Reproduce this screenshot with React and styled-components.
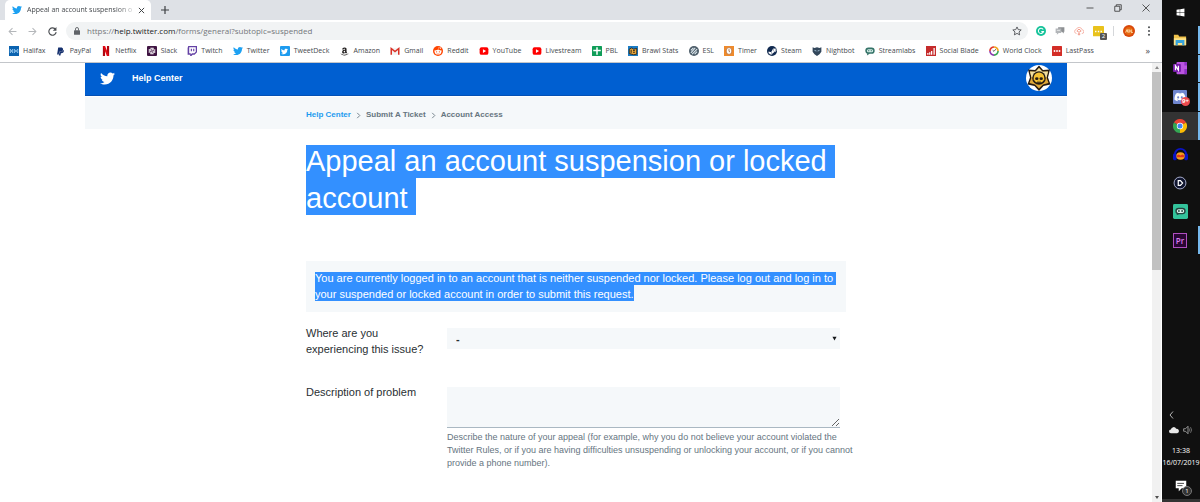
import React, { useState } from "react";
import styled, { createGlobalStyle, css } from "styled-components";
import { FaTwitter, FaPaypal, FaSlack, FaAmazon, FaRedditAlien, FaSteamSymbol, FaDiscord, FaWindows } from "react-icons/fa";

/* ---------- icons ---------- */

const Svg = ({ size = 10, box = 16, children }) => (
  <svg width={size} height={size} viewBox={`0 0 ${box} ${box}`} fill="none" aria-hidden="true">
    {children}
  </svg>
);

const HalifaxIcon = () => (
  <Svg>
    <rect width="16" height="16" fill="#0b63b0" />
    <path d="M2 5l4 6M6 5l-4 6M2 5v6M6 5v6M8 5l6 6M14 5l-6 6M14 5v6M9 5v6" stroke="#9fd0f5" strokeWidth="1.2" />
  </Svg>
);

const NetflixIcon = () => (
  <Svg>
    <path d="M3 0h3.500v16H3zM9.500 0H13v16H9.500z" fill="#b1060f" />
    <path d="M3 0h3.500L13 16H9.500z" fill="#e50914" />
  </Svg>
);

const TwitchIcon = () => (
  <Svg>
    <path d="M2 0h14v10l-4 4H9l-2 2H5v-2H1V3z" fill="#6441a5" />
    <path d="M3.500 2h10.500v7L11.500 11.500H8l-2 2v-2H3.500z" fill="#fff" />
    <path d="M7 4.500v4M10.800 4.500v4" stroke="#6441a5" strokeWidth="1.800" />
  </Svg>
);

const GmailIcon = () => (
  <Svg>
    <path d="M1 3h14v11H1z" fill="#f2f2f2" />
    <path d="M2 14V4l6 5 6-5v10" stroke="#d93025" strokeWidth="2.400" />
  </Svg>
);

const YoutubeIcon = () => (
  <Svg>
    <rect x="1" y="2" width="14" height="12" rx="3" fill="#f00" />
    <path d="M6.300 5v6l5-3z" fill="#fff" />
  </Svg>
);

const SheetIcon = () => (
  <Svg>
    <rect width="16" height="16" rx="1" fill="#0f9d58" />
    <path d="M2 7h12M8 2v12" stroke="#fff" strokeWidth="2.400" />
  </Svg>
);

const BrawlIcon = () => (
  <Svg>
    <rect width="16" height="16" fill="#1b7cc4" />
    <path d="M2 5l4-2 3 2 5-1v9l-5 1-7-2z" fill="#e8a63a" stroke="#2b2419" strokeWidth="1.400" />
    <path d="M5 6v5M8 7h3M8 10h3" stroke="#2b2419" strokeWidth="1.500" />
  </Svg>
);

const EslIcon = () => (
  <Svg>
    <circle cx="8" cy="8" r="8" fill="#4d5d69" />
    <path d="M3 11l7-8M5 13l8-8M3 7l4-4M9 13l4-4" stroke="#dfeaf0" strokeWidth="1.700" />
  </Svg>
);

const TimerIcon = () => (
  <Svg>
    <rect width="16" height="16" fill="#ee8a2c" />
    <ellipse cx="8" cy="8" rx="4.500" ry="5.500" fill="#fff" stroke="#a9591b" />
    <path d="M8 5v3.500l1.500 1" stroke="#8a4a19" strokeWidth="1.200" />
  </Svg>
);

const NightbotIcon = () => (
  <Svg>
    <path d="M1 2l3 1 4-1 4 1 3-1v7l-3 4-4 3-4-3-3-4z" fill="#33475b" />
    <path d="M4 7l3 1M12 7L9 8" stroke="#a7c6dc" strokeWidth="1.400" />
  </Svg>
);

const StreamlabsIcon = () => (
  <Svg>
    <rect x="0.500" y="2.500" width="15" height="10" rx="5" fill="#357368" />
    <path d="M4 11l-1 4 5-3z" fill="#357368" />
    <rect x="3" y="5" width="10" height="5" rx="2.500" fill="#d7efe9" />
    <path d="M6 6.500v2M10 6.500v2" stroke="#357368" strokeWidth="1.600" />
  </Svg>
);

const BladeIcon = () => (
  <Svg>
    <rect width="16" height="16" fill="#c52b2b" />
    <path d="M3 14v-3M6 14v-4M9 14V8M13 14V3" stroke="#fff" strokeWidth="2" />
  </Svg>
);

const ClockIcon = () => (
  <Svg>
    <path d="M8 1.500A6.500 6.500 0 0 1 14.500 8" stroke="#f2a51c" strokeWidth="2.600" />
    <path d="M14.500 8A6.500 6.500 0 0 1 8 14.500" stroke="#3aa655" strokeWidth="2.600" />
    <path d="M8 14.500A6.500 6.500 0 0 1 1.500 8" stroke="#8d3bb0" strokeWidth="2.600" />
    <path d="M1.500 8A6.500 6.500 0 0 1 8 1.500" stroke="#e23b2e" strokeWidth="2.600" />
    <path d="M8 8.500l3-3.500M8 8.500L6 7" stroke="#444" strokeWidth="1.300" />
  </Svg>
);

const LastPassIcon = () => (
  <Svg>
    <rect width="16" height="16" rx="1" fill="#d32d27" />
    <circle cx="4" cy="8" r="1.500" fill="#fff" />
    <circle cx="8" cy="8" r="1.500" fill="#fff" />
    <circle cx="12" cy="8" r="1.500" fill="#fff" />
  </Svg>
);

const ChromeIcon = () => (
  <Svg size={14} box={24}>
    <path d="M12 12L1.600 6A12 12 0 0 1 22.400 6z" fill="#ea4335" />
    <path d="M12 12l10.400-6A12 12 0 0 1 12 24z" fill="#fbbc05" />
    <path d="M12 12v12A12 12 0 0 1 1.600 6z" fill="#34a853" />
    <circle cx="12" cy="12" r="5.500" fill="#fff" />
    <circle cx="12" cy="12" r="4.300" fill="#4285f4" />
  </Svg>
);

const FolderIcon = () => (
  <Svg size={14}>
    <path d="M1 2h5l1 2h8v10H1z" fill="#f0c24b" />
    <path d="M1 6h14v8H1z" fill="#fce38b" />
    <path d="M3 8h10v6h-2.500v-2.500h-5V14H3z" fill="#36a3dc" />
  </Svg>
);

const OneNoteIcon = () => (
  <Svg size={14}>
    <rect x="4" y="1" width="12" height="14" rx="1" fill="#ba55e0" />
    <path d="M13 1h3v4h-3zM13 9h3v6h-3z" fill="#8f2fc4" />
    <rect y="3.500" width="9" height="9" rx="1" fill="#7719aa" />
    <path d="M2.800 10.500v-5l3.400 5v-5" stroke="#fff" strokeWidth="1.400" />
  </Svg>
);

const HeadphonesIcon = () => (
  <Svg size={15}>
    <path d="M2 11V8a6 6 0 0 1 12 0v3" stroke="#0a13c4" strokeWidth="2" />
    <rect y="7" width="4" height="7" rx="1.500" fill="#0a13c4" />
    <rect x="12" y="7" width="4" height="7" rx="1.500" fill="#0a13c4" />
    <ellipse cx="8" cy="9.500" rx="4.500" ry="4" fill="#f5a01d" />
    <path d="M4 9l2-1 2 1 2-1 2 1-.500 2h-7z" fill="#e2321e" />
  </Svg>
);

const PlayIcon = () => (
  <Svg size={14}>
    <circle cx="8" cy="8" r="6.800" fill="#10152e" stroke="#b9bfe0" strokeWidth="1" />
    <path d="M6 5.300v5.400h2.500L11 8 8.500 5.300z" stroke="#fff" strokeWidth="1.400" />
  </Svg>
);

const ObsIcon = () => (
  <Svg size={15}>
    <rect width="16" height="16" rx="1.500" fill="#33c39b" />
    <rect x="2.500" y="4" width="11" height="7" rx="3.500" fill="#23443f" />
    <rect x="4" y="5.500" width="8" height="4" rx="2" fill="#d9f4ec" />
    <path d="M6.300 6.500v2M9.700 6.500v2" stroke="#23443f" strokeWidth="1.400" />
    <path d="M4 10v2l3-1.500z" fill="#23443f" />
  </Svg>
);

const AvatarIcon = () => (
  <Svg size={26} box={26}>
    <circle cx="13" cy="13" r="13" fill="#fff" />
    <path d="M13 .500l4 4.500 7-.500-2 8 2.500 7-7 1.500-4.500 5-4.500-5-7-1.500 2.500-7-2-8 7 .500z" fill="#241a12" />
    <path d="M13 3l3.500 3.800 5.500-.300-1.500 6 2 5.500-5.500 1.500L13 23.500l-4-4L3.500 18l2-5.500-1.500-6 5.500.300z" fill="#e0a838" />
    <path d="M13 3l3.500 3.800 5.500-.300-1.500 6h-15l-1.500-6 5.500.300z" fill="#f1dfa0" />
    <circle cx="13" cy="13" r="6.800" fill="#241a12" />
    <path d="M7.700 12.800a5.300 5.300 0 0 1 10.600 0v2L16 17.300h-6l-2.300-2.500z" fill="#f6c234" />
    <ellipse cx="10.800" cy="13.700" rx="1.700" ry="1.400" fill="#241a12" />
    <ellipse cx="15.200" cy="13.700" rx="1.700" ry="1.400" fill="#241a12" />
    <path d="M12 17.300v-1.500M14 17.300v-1.500" stroke="#241a12" strokeWidth="0.700" />
  </Svg>
);

/* ---------- data ---------- */

const bookmarks = [
  ["Halifax", <HalifaxIcon />],
  ["PayPal", <FaPaypal size={9} color="#15306e" />],
  ["Netflix", <NetflixIcon />],
  ["Slack", <FaSlack size={8} color="#fff" />, "#3f1442"],
  ["Twitch", <TwitchIcon />],
  ["Twitter", <FaTwitter size={10} color="#1da1f2" />],
  ["TweetDeck", <FaTwitter size={7} color="#fff" />, "#1d9bef"],
  ["Amazon", <FaAmazon size={9} color="#221f1f" />],
  ["Gmail", <GmailIcon />],
  ["Reddit", <FaRedditAlien size={8} color="#fff" />, "#ff4500", true],
  ["YouTube", <YoutubeIcon />],
  ["Livestream", <YoutubeIcon />],
  ["PBL", <SheetIcon />],
  ["Brawl Stats", <BrawlIcon />],
  ["ESL", <EslIcon />],
  ["Timer", <TimerIcon />],
  ["Steam", <FaSteamSymbol size={9} color="#fff" />, "#10294f", true],
  ["Nightbot", <NightbotIcon />],
  ["Streamlabs", <StreamlabsIcon />],
  ["Social Blade", <BladeIcon />],
  ["World Clock", <ClockIcon />],
  ["LastPass", <LastPassIcon />],
];

const apps = [
  { name: "Start", icon: <FaWindows size={9} color="#fff" /> },
  { name: "File Explorer", icon: <FolderIcon />, running: true },
  { name: "OneNote", icon: <OneNoteIcon />, running: true },
  { name: "Discord", icon: <FaDiscord size={12} color="#fff" />, running: true, badge: "9+", tile: true },
  { name: "Chrome", icon: <ChromeIcon />, running: true, active: true },
  { name: "Audacity", icon: <HeadphonesIcon /> },
  { name: "Player", icon: <PlayIcon /> },
  { name: "Streamlabs OBS", icon: <ObsIcon /> },
  { name: "Premiere", icon: <PremiereMark />, running: true },
];

function PremiereMark() {
  return <Premiere>Pr</Premiere>;
}

/* ---------- page ---------- */

const App = () => {
  const [issue, setIssue] = useState("");
  const [description, setDescription] = useState("");

  return (
    <Screen>
      <GlobalStyle />
      <Browser>
        <TabStrip>
          <Tab>
            <FaTwitter size={10} color="#1da1f2" />
            <TabTitle>Appeal an account suspension o</TabTitle>
            <IconButton aria-label="Close tab">
              <Svg size={7}>
                <path d="M2 2l12 12M14 2L2 14" stroke="#3c4043" strokeWidth="2.200" />
              </Svg>
            </IconButton>
          </Tab>
          <IconButton aria-label="New tab">
            <Svg size={8}>
              <path d="M8 0v16M0 8h16" stroke="#3c4043" strokeWidth="2.400" />
            </Svg>
          </IconButton>
          <WindowControls>
            <IconButton aria-label="Minimize">
              <Svg size={8}>
                <path d="M1 8h14" stroke="#333" strokeWidth="1.600" />
              </Svg>
            </IconButton>
            <IconButton aria-label="Restore">
              <Svg size={8}>
                <path d="M1.500 4.500h10v10h-10zM4.500 4V1.500h10v10H12" stroke="#333" strokeWidth="1.600" />
              </Svg>
            </IconButton>
            <IconButton aria-label="Close">
              <Svg size={8}>
                <path d="M1 1l14 14M15 1L1 15" stroke="#333" strokeWidth="1.600" />
              </Svg>
            </IconButton>
          </WindowControls>
        </TabStrip>

        <Toolbar>
          <NavButtons>
            <IconButton aria-label="Back">
              <Svg size={9}>
                <path d="M15 8H2M8 2L2 8l6 6" stroke="#b4b7ba" strokeWidth="1.800" />
              </Svg>
            </IconButton>
            <IconButton aria-label="Forward">
              <Svg size={9}>
                <path d="M1 8h13M8 2l6 6-6 6" stroke="#b4b7ba" strokeWidth="1.800" />
              </Svg>
            </IconButton>
            <IconButton aria-label="Reload">
              <Svg size={9}>
                <path d="M13.500 4.500A6.500 6.500 0 1 0 14.500 9" stroke="#4a4d51" strokeWidth="2" />
                <path d="M15 0v6.500H8.500z" fill="#4a4d51" />
              </Svg>
            </IconButton>
          </NavButtons>
          <Omnibox>
            <Svg size={8}>
              <rect x="2" y="6.500" width="12" height="9" rx="1" fill="#5f6368" />
              <path d="M5 7V4a3 3 0 0 1 6 0v3" stroke="#5f6368" strokeWidth="1.800" />
            </Svg>
            <Url>
              https://<b>help.twitter.com</b>/forms/general?subtopic=suspended
            </Url>
            <IconButton aria-label="Bookmark this page">
              <Svg size={10}>
                <path d="M8 1.500l2 4.300 4.700.500-3.500 3.200 1 4.700L8 11.800l-4.200 2.400 1-4.700L1.300 6.300 6 5.800z" stroke="#4a4d51" strokeWidth="1.400" />
              </Svg>
            </IconButton>
          </Omnibox>
          <Extensions>
            <Svg size={10}>
              <circle cx="8" cy="8" r="8" fill="#15c39a" />
              <path d="M11.500 5.500A4.200 4.200 0 1 0 12 9H8.500" stroke="#fff" strokeWidth="1.700" />
            </Svg>
            <Svg size={10}>
              <path d="M5 2h10v7h-1v3l-3-3H5z" fill="#8d9093" />
              <path d="M1 4h9v7H6l-3 3v-3H1z" fill="#b3b6b9" />
              <path d="M3 7h5" stroke="#fff" />
            </Svg>
            <Svg size={10}>
              <path d="M4 12a3.300 3.300 0 0 1-.500-6.500 5 5 0 0 1 9.500.500 3 3 0 0 1-.500 6" stroke="#f6b3a6" strokeWidth="1.500" />
              <path d="M5.500 9.500a2.800 2.800 0 1 1 5 0M8 8v7M6 13h4" stroke="#ef8e7c" strokeWidth="1.500" />
            </Svg>
            <BadgedIcon>
              <Svg size={11}>
                <rect width="16" height="15" rx="1" fill="#e9c21c" />
                <path d="M3 8h10" stroke="#fff" strokeWidth="2" strokeDasharray="2 2" />
              </Svg>
              <CountBadge>2</CountBadge>
            </BadgedIcon>
            <Separator />
            <Svg size={12}>
              <circle cx="8" cy="8" r="8" fill="#d9480b" />
              <circle cx="8" cy="8" r="5.500" fill="#e5690f" />
              <path d="M3.500 10l2-4 1 4M8 10V6l2 2-2 2M11 6v4h2" stroke="#ffd9a8" strokeWidth="1.300" />
            </Svg>
            <IconButton aria-label="Menu">
              <Svg size={10}>
                <circle cx="8" cy="2" r="1.600" fill="#4a4d51" />
                <circle cx="8" cy="8" r="1.600" fill="#4a4d51" />
                <circle cx="8" cy="14" r="1.600" fill="#4a4d51" />
              </Svg>
            </IconButton>
          </Extensions>
        </Toolbar>

        <BookmarkBar>
          <BookmarkList>
            {bookmarks.map(([label, icon, tile, round]) => (
              <Bookmark href="#" key={label}>
                <Favicon $tile={tile} $round={round}>
                  {icon}
                </Favicon>
                {label}
              </Bookmark>
            ))}
          </BookmarkList>
          <More aria-label="More bookmarks">»</More>
        </BookmarkBar>

        <Viewport>
          <Site>
            <SiteHeader>
              <FaTwitter size={15} color="#fff" />
              <SiteTitle href="#">Help Center</SiteTitle>
              <AvatarIcon />
            </SiteHeader>
            <Breadcrumb aria-label="Breadcrumb">
              <Crumb href="#" $current>
                Help Center
              </Crumb>
              <CrumbArrow />
              <Crumb href="#">Submit A Ticket</Crumb>
              <CrumbArrow />
              <Crumb href="#">Account Access</Crumb>
            </Breadcrumb>
            <Content>
              <Heading>
                <HeadingLine>Appeal an account suspension or locked</HeadingLine>
                <HeadingLine>account</HeadingLine>
              </Heading>
              <Notice>
                <NoticeLine $trail>You are currently logged in to an account that is neither suspended nor locked. Please log out and log in to</NoticeLine>
                <NoticeLine>your suspended or locked account in order to submit this request.</NoticeLine>
              </Notice>
              <Form onSubmit={(e) => e.preventDefault()}>
                <Label htmlFor="issue">Where are you experiencing this issue?</Label>
                <SelectBox>
                  <Select id="issue" value={issue} onChange={(e) => setIssue(e.target.value)}>
                    <option value="">-</option>
                  </Select>
                  <SelectArrow viewBox="0 0 6 6" aria-hidden="true">
                    <path d="M0.500 1h5L3 5.500z" fill="#14171a" />
                  </SelectArrow>
                </SelectBox>
                <Label htmlFor="description">Description of problem</Label>
                <div>
                  <TextArea id="description" value={description} onChange={(e) => setDescription(e.target.value)} />
                  <Hint>
                    Describe the nature of your appeal (for example, why you do not believe your account violated the
                    <br />
                    Twitter Rules, or if you are having difficulties unsuspending or unlocking your account, or if you cannot
                    <br />
                    provide a phone number).
                  </Hint>
                </div>
              </Form>
            </Content>
          </Site>
          <Scrollbar>
            <ScrollArrow />
            <Thumb />
            <ScrollArrow $down />
          </Scrollbar>
        </Viewport>
      </Browser>

      <Taskbar>
        <AppList>
          {apps.map(({ name, icon, running, active, badge, tile }) => (
            <AppButton key={name} aria-label={name} $running={running} $active={active}>
              <AppIcon $tile={tile}>
                {icon}
                {badge && <AppBadge>{badge}</AppBadge>}
              </AppIcon>
            </AppButton>
          ))}
        </AppList>
        <Tray>
          <TrayRow $start>
            <Svg size={8}>
              <path d="M10 1L4 8l6 7" stroke="#ddd" strokeWidth="1.600" />
            </Svg>
          </TrayRow>
          <TrayRow>
            <Svg size={10}>
              <path d="M3 13a3 3 0 0 1 0-6 4.500 4.500 0 0 1 8.500-1A3.500 3.500 0 0 1 13 13z" fill="#e9e9e9" />
            </Svg>
            <Svg size={10}>
              <path d="M1 6h3l4-4v12l-4-4H1z" stroke="#bbb" strokeWidth="1.200" />
              <path d="M10 5.500q2 2.500 0 5M12 3.500q3.500 4.500 0 9" stroke="#888" strokeWidth="1.200" />
            </Svg>
          </TrayRow>
          <Clock>
            <span>13:38</span>
            <span>16/07/2019</span>
          </Clock>
          <Notifications aria-label="Notifications">
            <Svg size={12}>
              <path d="M1 1h14v10H9l-4 4v-4H1z" fill="#fff" />
              <path d="M3 4.500h9M3 7.500h7" stroke="#111" />
            </Svg>
            <NotificationCount>1</NotificationCount>
          </Notifications>
        </Tray>
      </Taskbar>
    </Screen>
  );
};

const CrumbArrow = () => (
  <Svg size={7}>
    <path d="M5 2l6 6-6 6" stroke="#66757f" strokeWidth="2" />
  </Svg>
);

/* ---------- styles ---------- */

const uiFont = `"Open Sans", "Noto Sans", sans-serif`;
const pageFont = `"Liberation Sans", Arial, sans-serif`;

const GlobalStyle = createGlobalStyle`
  *, *::before, *::after {
    box-sizing: border-box;
  }
  body {
    margin: 0;
    background: #fff;
  }
  svg {
    display: block;
    flex: none;
  }
  button {
    border: 0;
    padding: 0;
    background: none;
    font: inherit;
    color: inherit;
  }
`;

const Screen = styled.div`
  display: flex;
  height: 100vh;
  overflow: hidden;
  background: #111;
`;

const Browser = styled.div`
  display: flex;
  flex-direction: column;
  flex: 1;
  min-width: 0;
  background: #fff;
  font-family: ${uiFont};
`;

const IconButton = styled.button`
  display: flex;
  align-items: center;
  justify-content: center;
`;

const TabStrip = styled.div`
  display: flex;
  align-items: center;
  gap: 10px;
  height: 20px;
  padding: 0 12px 0 5px;
  background: #dee1e6;
`;

const Tab = styled.div`
  display: flex;
  align-items: center;
  gap: 5px;
  width: 146px;
  height: 20px;
  padding: 0 6px 0 7px;
  border-radius: 5px 5px 0 0;
  background: #fff;
`;

const TabTitle = styled.span`
  flex: 1;
  white-space: nowrap;
  font-size: 7px;
  line-height: 12px;
  color: #45494d;
  mask-image: linear-gradient(to right, #000 85%, rgba(0, 0, 0, 0.2));
`;

const WindowControls = styled.div`
  display: flex;
  gap: 20px;
  height: 16px;
  margin-left: auto;
  align-self: flex-start;
`;

const Toolbar = styled.div`
  display: flex;
  align-items: center;
  height: 22px;
  padding: 0 8px;
`;

const NavButtons = styled.div`
  display: flex;
  gap: 11px;
  width: 58px;
`;

const Omnibox = styled.div`
  display: flex;
  align-items: center;
  flex: 1;
  gap: 6px;
  height: 18px;
  padding: 0 6px 0 7px;
  border-radius: 9px;
  background: #f1f3f4;
`;

const Url = styled.span`
  flex: 1;
  font-size: 8px;
  line-height: 16px;
  color: #73777b;
  b {
    font-weight: 400;
    color: #202124;
  }
`;

const Extensions = styled.div`
  display: flex;
  align-items: center;
  gap: 9px;
  padding-left: 8px;
`;

const BadgedIcon = styled.div`
  position: relative;
`;

const CountBadge = styled.span`
  position: absolute;
  right: -3px;
  bottom: -3px;
  width: 7px;
  border-radius: 1px;
  background: #555;
  color: #fff;
  font-size: 6px;
  line-height: 7px;
  text-align: center;
`;

const Separator = styled.div`
  width: 1px;
  height: 10px;
  background: #d5d7da;
`;

const BookmarkBar = styled.div`
  display: flex;
  align-items: center;
  justify-content: space-between;
  height: 21px;
  padding: 0 12px 2px 9px;
  border-bottom: 1px solid #c3c6ca;
`;

const BookmarkList = styled.div`
  display: flex;
  justify-content: space-between;
  flex: 0 1 1085px;
  min-width: 0;
`;

const Bookmark = styled.a`
  display: flex;
  align-items: center;
  gap: 4px;
  font-size: 7px;
  line-height: 10px;
  white-space: nowrap;
  text-decoration: none;
  color: #45494d;
`;

const Favicon = styled.span`
  display: flex;
  align-items: center;
  justify-content: center;
  width: 10px;
  height: 10px;
  border-radius: ${({ $round }) => ($round ? "50%" : "1px")};
  background: ${({ $tile }) => $tile || "none"};
`;

const More = styled.button`
  font-size: 9px;
  line-height: 10px;
  color: #45494d;
`;

const Viewport = styled.div`
  display: flex;
  flex: 1;
  min-height: 0;
  font-family: ${pageFont};
`;

const Site = styled.div`
  flex: 1;
  max-width: 982px;
  margin: 0 auto;
  overflow: hidden;
`;

const SiteHeader = styled.header`
  display: flex;
  align-items: center;
  gap: 17px;
  height: 33px;
  padding: 0 15px 2px;
  border-bottom: 1px solid #0450b4;
  background: #005fd1;
`;

const SiteTitle = styled.a`
  flex: 1;
  font-size: 9px;
  font-weight: 700;
  line-height: 12px;
  text-decoration: none;
  color: #fff;
`;

const Breadcrumb = styled.nav`
  display: flex;
  align-items: center;
  gap: 4px;
  height: 32px;
  margin-top: 1px;
  padding: 4px calc(50% - 270px) 0;
  background: #f5f8fa;
`;

const Crumb = styled.a`
  font-size: 8px;
  font-weight: 700;
  line-height: 12px;
  text-decoration: none;
  color: ${({ $current }) => ($current ? "#1d9bef" : "#66757f")};
`;

const Content = styled.main`
  max-width: 540px;
  margin: 0 auto;
  padding-top: 16px;
`;

const selected = css`
  background: #3390ff;
  color: #fff;
`;

const Heading = styled.h1`
  display: flex;
  flex-direction: column;
  align-items: flex-start;
  margin: 0 0 46px;
  font-size: 29px;
  font-weight: 400;
  line-height: 33px;
`;

const HeadingLine = styled.span`
  ${selected}
  padding-right: 8px;
  & + & {
    padding-top: 4px;
  }
`;

const Notice = styled.div`
  display: flex;
  flex-direction: column;
  align-items: flex-start;
  margin-bottom: 13px;
  padding: 11px 9px;
  background: #f5f8fa;
  font-size: 11px;
  line-height: 13px;
`;

const NoticeLine = styled.span`
  ${selected}
  white-space: nowrap;
  padding-right: ${({ $trail }) => ($trail ? "3px" : "0")};
  & + & {
    padding-top: 3px;
  }
`;

const Form = styled.form`
  display: grid;
  grid-template-columns: 120px minmax(0, 1fr);
  column-gap: 21px;
  row-gap: 27px;
  padding-right: 6px;
`;

const Label = styled.label`
  font-size: 11px;
  line-height: 16px;
  color: #292f33;
`;

const SelectBox = styled.div`
  position: relative;
  align-self: start;
  margin-top: 3px;
`;

const Select = styled.select`
  display: block;
  appearance: none;
  width: 100%;
  height: 21px;
  padding: 0 9px;
  border: 0;
  border-radius: 0;
  outline: 0;
  background: #f5f8fa;
  font-family: ${pageFont};
  font-size: 11px;
  font-weight: 700;
  color: #292f33;
`;

const SelectArrow = styled.svg`
  position: absolute;
  top: 8px;
  right: 3px;
  width: 5px;
  height: 5px;
  pointer-events: none;
`;

const TextArea = styled.textarea`
  display: block;
  width: 100%;
  height: 41px;
  margin-top: 3px;
  border: 0;
  border-bottom: 1px solid #aab8c2;
  outline: 0;
  resize: vertical;
  background: #f5f8fa;
  font-family: ${pageFont};
  font-size: 11px;
`;

const Hint = styled.p`
  margin: 3px 0 0;
  font-size: 9px;
  line-height: 13px;
  white-space: nowrap;
  color: #66757f;
`;

const Scrollbar = styled.div`
  display: flex;
  flex-direction: column;
  width: 9px;
  margin-right: 1px;
  background: #f1f1f1;
`;

const ScrollArrow = styled.div`
  display: flex;
  align-items: center;
  justify-content: center;
  height: 9px;
  margin-top: ${({ $down }) => ($down ? "auto" : "0")};
  &::before {
    content: "";
    border: 2px solid transparent;
    border-top: ${({ $down }) => ($down ? "3px solid #505050" : "0")};
    border-bottom: ${({ $down }) => ($down ? "0" : "3px solid #8a8a8a")};
  }
`;

const Thumb = styled.div`
  height: 45%;
  background: #c1c1c1;
`;

const Taskbar = styled.aside`
  display: flex;
  flex-direction: column;
  justify-content: space-between;
  width: 38px;
  border-bottom: 3px solid #333;
  background: #101010;
  color: #fff;
  font-family: ${uiFont};
`;

const AppList = styled.div`
  display: grid;
  grid-template-rows: 25px repeat(8, 1fr);
  row-gap: 1px;
  height: 254px;
`;

const AppButton = styled.button`
  display: flex;
  align-items: center;
  justify-content: center;
  border-right: 2px solid ${({ $running }) => ($running ? "#76b9ed" : "transparent")};
  background: ${({ $active }) => ($active ? "#333" : "none")};
  background-clip: padding-box;
`;

const AppIcon = styled.span`
  position: relative;
  display: flex;
  padding: ${({ $tile }) => ($tile ? "1px" : "0")};
  border-radius: 1px;
  background: ${({ $tile }) => ($tile ? "#6f86cf" : "none")};
`;

const AppBadge = styled.span`
  position: absolute;
  right: -3px;
  bottom: -2px;
  width: 9px;
  border-radius: 5px;
  background: #ec4b4f;
  color: #fff;
  font-size: 6px;
  font-weight: 700;
  line-height: 9px;
  text-align: center;
`;

const Premiere = styled.span`
  width: 14px;
  border: 1px solid #b04fc0;
  background: #2a0634;
  color: #da7ff0;
  font-size: 8px;
  font-weight: 600;
  line-height: 13px;
  text-align: center;
`;

const Tray = styled.div`
  display: flex;
  flex-direction: column;
  align-items: center;
  padding-bottom: 7px;
`;

const TrayRow = styled.div`
  display: flex;
  align-items: center;
  justify-content: ${({ $start }) => ($start ? "flex-start" : "center")};
  gap: 4px;
  width: 26px;
  height: 15px;
`;

const Clock = styled.div`
  display: flex;
  flex-direction: column;
  align-items: center;
  margin: 8px 0 11px;
  font-size: 7px;
  line-height: 12px;
`;

const Notifications = styled.button`
  position: relative;
`;

const NotificationCount = styled.span`
  position: absolute;
  right: -5px;
  bottom: -4px;
  width: 10px;
  border: 1px solid #777;
  border-radius: 5px;
  background: #333;
  font-size: 6px;
  line-height: 8px;
  text-align: center;
`;

export default App;
